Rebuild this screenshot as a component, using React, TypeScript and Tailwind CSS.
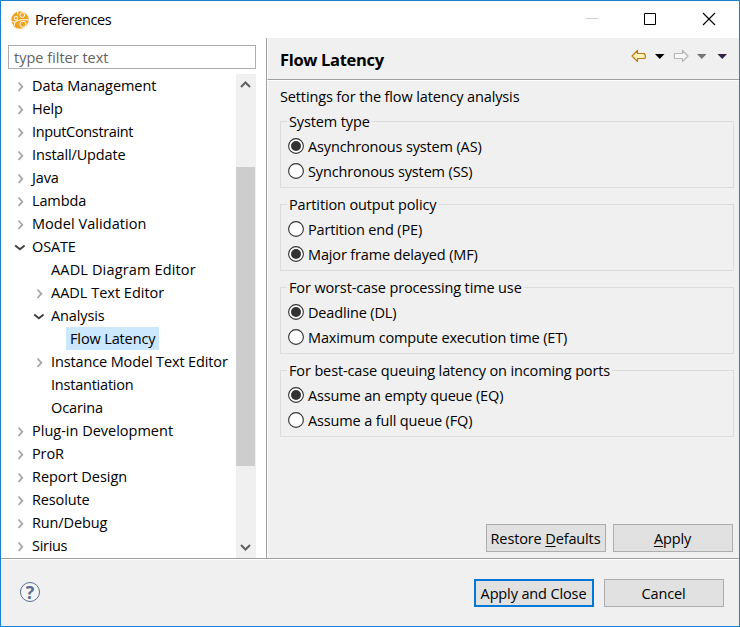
import type { ReactNode } from "react";

type NodeState = "closed" | "open" | "leaf";

interface TreeItem {
  label: string;
  level: number;
  state: NodeState;
  selected?: boolean;
  tracking?: string;
}

const tree: TreeItem[] = [
  { label: "Data Management", level: 0, state: "closed", tracking: "tracking-[-0.06px]" },
  { label: "Help", level: 0, state: "closed" },
  { label: "InputConstraint", level: 0, state: "closed", tracking: "tracking-[-0.35px]" },
  { label: "Install/Update", level: 0, state: "closed" },
  { label: "Java", level: 0, state: "closed" },
  { label: "Lambda", level: 0, state: "closed" },
  { label: "Model Validation", level: 0, state: "closed", tracking: "tracking-[0.05px]" },
  { label: "OSATE", level: 0, state: "open" },
  { label: "AADL Diagram Editor", level: 1, state: "leaf", tracking: "tracking-[0.15px]" },
  { label: "AADL Text Editor", level: 1, state: "closed", tracking: "tracking-[0px]" },
  { label: "Analysis", level: 1, state: "open" },
  { label: "Flow Latency", level: 2, state: "leaf", selected: true },
  { label: "Instance Model Text Editor", level: 1, state: "closed" },
  { label: "Instantiation", level: 1, state: "leaf", tracking: "tracking-[-0.22px]" },
  { label: "Ocarina", level: 1, state: "leaf" },
  { label: "Plug-in Development", level: 0, state: "closed", tracking: "tracking-[0px]" },
  { label: "ProR", level: 0, state: "closed" },
  { label: "Report Design", level: 0, state: "closed", tracking: "tracking-[-0.03px]" },
  { label: "Resolute", level: 0, state: "closed" },
  { label: "Run/Debug", level: 0, state: "closed" },
  { label: "Sirius", level: 0, state: "closed", tracking: "tracking-[-0.3px]" },
];

const indents = ["pl-[11px]", "pl-[30px]", "pl-[49px]"];

const groups = [
  { title: "System type", options: ["Asynchronous system (AS)", "Synchronous system (SS)"], value: 0 },
  { title: "Partition output policy", options: ["Partition end (PE)", "Major frame delayed (MF)"], value: 1 },
  {
    title: "For worst-case processing time use",
    options: ["Deadline (DL)", "Maximum compute execution time (ET)"],
    value: 0,
  },
  {
    title: "For best-case queuing latency on incoming ports",
    options: ["Assume an empty queue (EQ)", "Assume a full queue (FQ)"],
    value: 0,
  },
];

function AppIcon() {
  return (
    <svg width="18" height="18" viewBox="0 0 18 18">
      <circle cx="9" cy="9" r="8.7" fill="#f0a31c" />
      <g fill="none" stroke="#fff" strokeWidth="1">
        <circle cx="11.2" cy="4" r="2.4" />
        <circle cx="5" cy="7.2" r="1.8" />
        <circle cx="12" cy="13.2" r="3.1" />
        <path d="M0 10.500l3.500.5 4-1.500 4-1M4 11l-1 4M12 8.500l6 .5M6.500 0l.5 3.500" />
      </g>
    </svg>
  );
}

function Expander({ state }: { state: NodeState }) {
  if (state === "closed")
    return (
      <svg width="18" height="23" fill="none" stroke="#a6a6a6" strokeWidth="1.8">
        <path d="M7.500 8.500l3.800 4.200-3.800 4.300" />
      </svg>
    );
  if (state === "open")
    return (
      <svg width="18" height="23" fill="none" stroke="#404040" strokeWidth="1.9">
        <path d="M4.200 10.500l4.700 3.700 4.700-3.700" />
      </svg>
    );
  return <span className="w-[18px]" />;
}

function Radio({ label, checked }: { label: string; checked: boolean }) {
  return (
    <div className="flex h-[25px] items-center">
      <svg width="16" height="16" className="mr-1 shrink-0">
        <circle cx="8" cy="8" r="7.4" fill="#fff" stroke="#333" strokeWidth="1.1" />
        {checked && <circle cx="8" cy="8" r="5" fill="#333" />}
      </svg>
      <span className="pt-[2px] leading-[23px] tracking-[-0.15px]">{label}</span>
    </div>
  );
}

function Group({ title, options, value }: { title: string; options: string[]; value: number }) {
  return (
    <section className="h-[83px]">
      <div className="flex h-[20px] items-start">
        <div className="mt-[9px] h-[11px] w-[7px] border-l border-t border-[#dcdcdc]" />
        <span className="whitespace-nowrap px-[2px] leading-[20px]">{title}</span>
        <div className="mt-[9px] h-[11px] grow border-r border-t border-[#dcdcdc]" />
      </div>
      <div className="h-[56px] border border-t-0 border-[#dcdcdc] pl-[7px] pt-px">
        {options.map((o, i) => (
          <Radio key={o} label={o} checked={i === value} />
        ))}
      </div>
    </section>
  );
}

function Button({ children, primary }: { children: ReactNode; primary?: boolean }) {
  return (
    <button
      className={
        "flex h-[28px] w-[120px] items-center justify-center whitespace-nowrap bg-[#e1e1e1] pr-px pt-px " +
        (primary ? "border-2 border-[#0078d7]" : "border border-[#adadad]")
      }
    >
      {children}
    </button>
  );
}

export default function App() {
  return (
    <div className="flex h-[627px] w-[740px] flex-col overflow-hidden border border-[#1a80d4] bg-white font-['Open_Sans','Noto_Sans',sans-serif] text-[14.5px] tracking-[-0.13px] text-black">
      <header className="flex h-[37px] shrink-0 items-center">
        <div className="ml-[10px] mr-[6px]">
          <AppIcon />
        </div>
        <span className="grow tracking-[-0.4px]">Preferences</span>
        <svg width="154" height="37" fill="none">
          <path d="M1 17.5h12" stroke="#ccc" />
          <path d="M59.500 12.500h11v11h-11z" stroke="#000" />
          <path d="M118 12l12 12m0-12l-12 12" stroke="#000" strokeWidth="1.1" />
        </svg>
      </header>

      <main className="flex h-[520px] shrink-0">
        <aside className="flex w-[265px] flex-col pl-[7px] pt-[7px]">
          <div className="flex h-[24px] w-[248px] items-center border border-[#abadb3] pl-[5px] pt-[2px] tracking-[0px] text-[#636363]">
            type filter text
          </div>
          <div className="mt-[5px] flex h-[484px] w-[248px]">
            <div className="w-[228px] overflow-hidden">
              <div className="-ml-[8px]">
                {tree.map((t) => (
                  <div key={t.label} className={"flex h-[23px] items-center whitespace-nowrap " + indents[t.level]}>
                    <Expander state={t.state} />
                    <span
                      className={
                        "leading-[23px] " +
                        (t.selected ? "-ml-px bg-[#cce8ff] px-[4px] " : "px-[3px] ") +
                        (t.tracking ?? "")
                      }
                    >
                      {t.label}
                    </span>
                  </div>
                ))}
              </div>
            </div>
            <div className="flex w-[20px] flex-col bg-[#f0f0f0]">
              <svg width="20" height="93" fill="none" stroke="#606060" strokeWidth="2">
                <path d="M5 13l4.500-4.500 4.500 4.500" />
              </svg>
              <div className="h-[299px] w-[19px] bg-[#cdcdcd]" />
              <svg width="20" height="92" fill="none" stroke="#606060" strokeWidth="2">
                <path d="M5 79l4.500 4.500 4.500-4.500" />
              </svg>
            </div>
          </div>
        </aside>

        <section className="flex w-[473px] flex-col border-l border-[#a0a0a0] bg-[#f0f0f0]">
          <div className="flex h-[42px] shrink-0 items-center border-b border-[#a0a0a0] border-l border-l-white pl-[12px]">
            <h1 className="grow pt-[3px] text-[16.5px] font-bold tracking-[-0.32px]">Flow Latency</h1>
            <svg width="109" height="41">
              <g strokeLinejoin="round">
                <path
                  d="M2 18l5.500-5.500v3h7v1l.8.5v3l-.8.5h-7v3z"
                  fill="#fff2b8"
                  stroke="#c07b18"
                  strokeWidth="1.200"
                />
                <path
                  d="M58 18l-5.500-5.500v3h-7.500l-.6.5v4l.6.500h7.500v3z"
                  fill="#f7f7f7"
                  stroke="#b5b5b5"
                  strokeWidth="1.200"
                />
              </g>
              <path d="M25 16h9.500L29.750 21z" fill="#000" />
              <path d="M67 16h9.500L71.750 21z" fill="#747474" />
              <path d="M87.500 16h9.500L92.250 21z" fill="#32204c" />
            </svg>
          </div>
          <div className="flex grow flex-col border-l border-t border-white pl-[12px] pr-[5px]">
            <p className="h-[31px] pt-[6px] leading-[20px]">Settings for the flow latency analysis</p>
            {groups.map((g) => (
              <Group key={g.title} {...g} />
            ))}
            <div className="mt-auto flex justify-end gap-[7px] pb-[6px] pr-px">
              <Button>
                <span>
                  Restore <u className="underline-offset-2">D</u>efaults
                </span>
              </Button>
              <Button>
                <span>
                  <u className="underline-offset-2">A</u>pply
                </span>
              </Button>
            </div>
          </div>
        </section>
      </main>

      <footer className="flex grow items-start border-t border-[#a0a0a0] bg-[#f0f0f0]">
        <div className="flex h-full w-full items-start gap-[10px] border-t border-white pl-[19px] pr-[15px] pt-[19px]">
          <div className="mr-auto mt-[3px] flex h-[20px] w-[20px] items-center justify-center rounded-full border border-[#5c6f91] bg-[#f4f5f7] text-[18px] font-bold leading-none tracking-normal text-[#5c6f91]">
            ?
          </div>
          <Button primary>Apply and Close</Button>
          <Button>Cancel</Button>
        </div>
      </footer>
    </div>
  );
}
